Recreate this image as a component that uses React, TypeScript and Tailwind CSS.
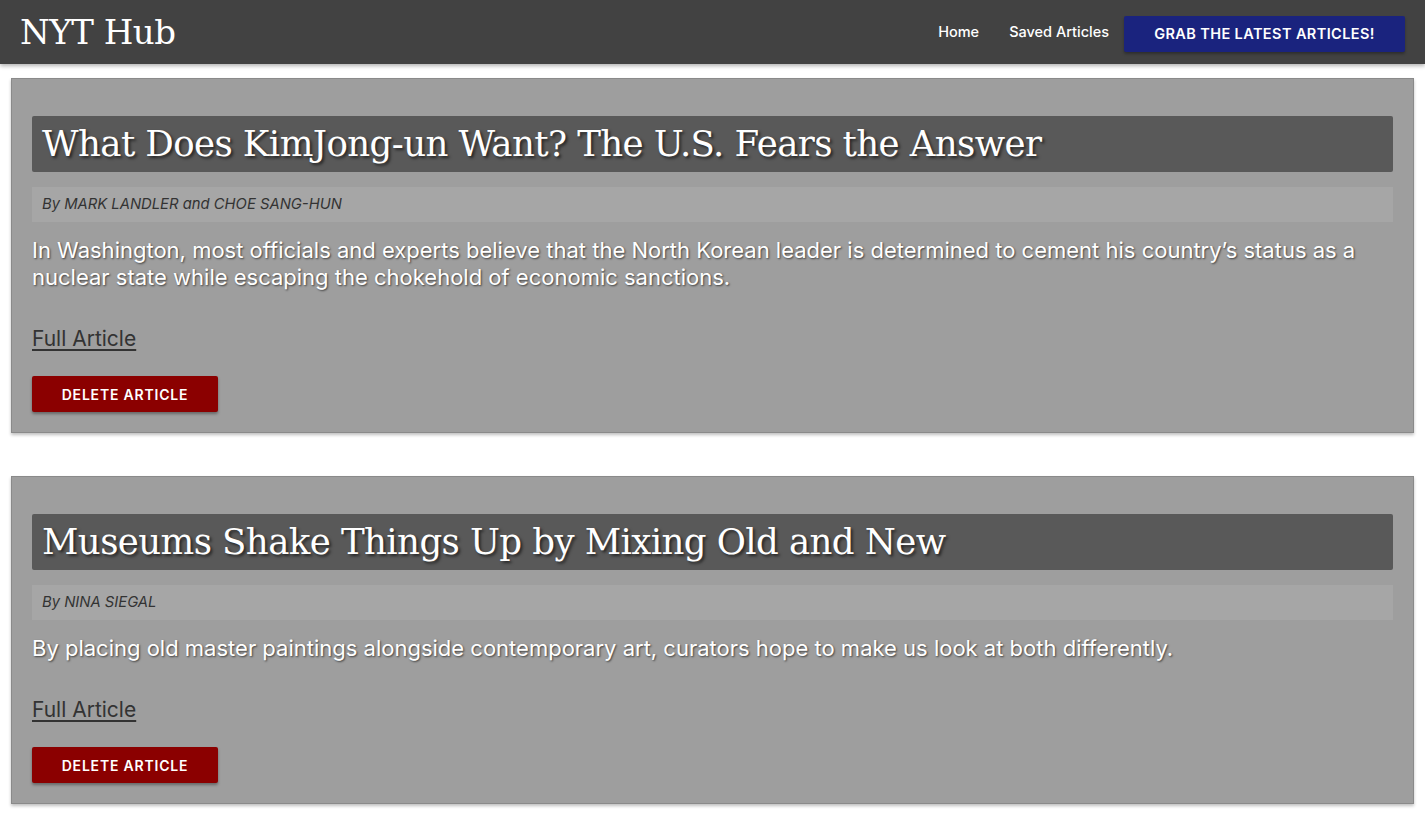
const articles = [
  {
    title: "What Does KimJong-un Want? The U.S. Fears the Answer",
    byline: "By MARK LANDLER and CHOE SANG-HUN",
    summary:
      "In Washington, most officials and experts believe that the North Korean leader is determined to cement his country’s status as a nuclear state while escaping the chokehold of economic sanctions.",
  },
  {
    title: "Museums Shake Things Up by Mixing Old and New",
    byline: "By NINA SIEGAL",
    summary:
      "By placing old master paintings alongside contemporary art, curators hope to make us look at both differently.",
  },
];

function Navbar() {
  return (
    <nav className="relative z-10 flex h-16 items-center justify-between bg-[#424242] px-5 shadow-[0_2px_4px_rgba(0,0,0,0.3)]">
      <a className="font-['DejaVu_Serif',serif] text-[34px] tracking-[-0.5px] text-white">NYT Hub</a>
      <div className="flex items-center font-['Inter',sans-serif] text-[14.5px] font-medium text-white">
        <a className="px-[15px]">Home</a>
        <a className="px-[15px]">Saved Articles</a>
        <button className="mt-[4px] h-9 w-[281px] rounded-[2px] bg-[#1a237e] text-[14.5px] font-semibold uppercase tracking-[0.4px] text-white shadow-[0_2px_3px_rgba(0,0,0,0.3)]">
          Grab the latest articles!
        </button>
      </div>
    </nav>
  );
}

function ArticleCard({ title, byline, summary }: { title: string; byline: string; summary: string }) {
  return (
    <div className="mx-[11px] border border-[#8a8a8a] bg-[#9e9e9e] px-5 pt-[37px] pb-5 shadow-[0_2px_3px_rgba(0,0,0,0.25)]">
      <h2 className="flex h-14 items-center rounded-[2px] bg-[#595959] px-[10px] font-['DejaVu_Serif',serif] text-[35.6px] tracking-[-0.6px] text-white [text-shadow:2px_2px_3px_rgba(0,0,0,0.6)]">
        {title}
      </h2>
      <p className="mt-[15px] flex h-[35px] items-center bg-[#a6a6a6] px-[10px] font-['Inter',sans-serif] text-[14.8px] italic text-[#333]">
        {byline}
      </p>
      <p className="mt-[15px] font-['Inter',sans-serif] text-[22px] leading-[27px] text-white [text-shadow:1px_1px_2px_rgba(0,0,0,0.6)]">
        {summary}
      </p>
      <a className="mt-[35px] block w-fit font-['Inter',sans-serif] text-[21px] leading-[26px] text-[#333] underline underline-offset-[3px]">
        Full Article
      </a>
      <button className="mt-[24px] h-9 w-[186px] rounded-[2px] bg-[#8b0000] font-['Inter',sans-serif] text-[14px] font-semibold uppercase tracking-[0.8px] text-white shadow-[0_2px_3px_rgba(0,0,0,0.35)]">
        Delete Article
      </button>
    </div>
  );
}

export default function App() {
  return (
    <div className="min-h-screen bg-white font-['Inter',sans-serif]">
      <Navbar />
      <main className="flex flex-col gap-[43px] pt-[14px] pb-6">
        {articles.map((a) => (
          <ArticleCard key={a.title} {...a} />
        ))}
      </main>
    </div>
  );
}
